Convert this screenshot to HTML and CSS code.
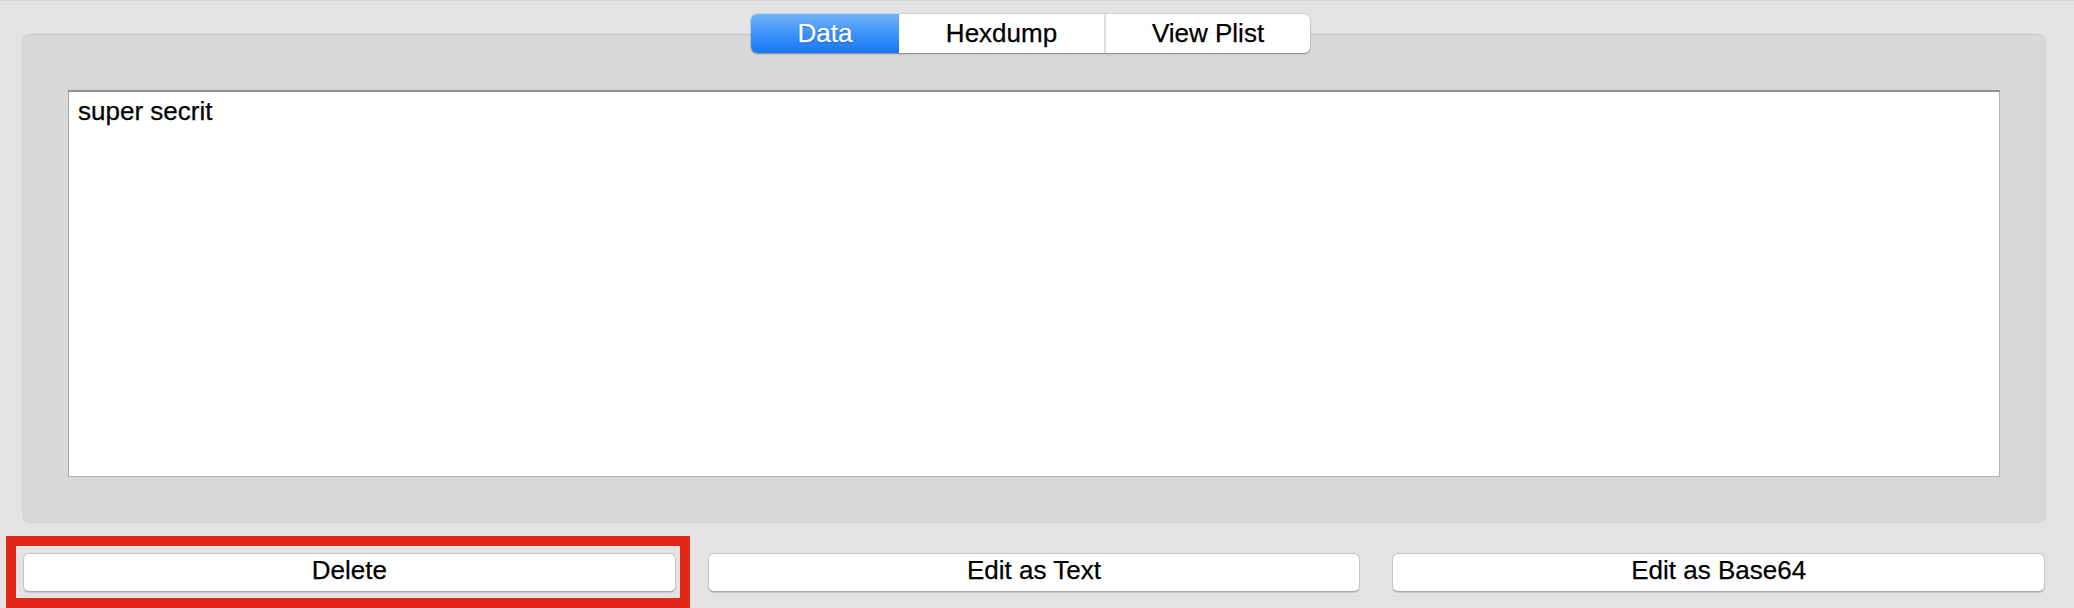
FILE: index.html
```html
<!DOCTYPE html>
<html>
<head>
<meta charset="utf-8">
<link rel="stylesheet" href="styles.css">
</head>
<body>
<div class="window">
  <div class="tabs">
    <div class="segmented">
      <div class="seg seg-data active">Data</div>
      <div class="seg seg-hex">Hexdump</div>
      <div class="seg seg-plist">View Plist</div>
    </div>
  </div>
  <div class="groupbox">
    <div class="textarea">super secrit</div>
  </div>
  <div class="actions">
    <div class="btn-wrap">
      <button class="btn">Delete</button>
      <div class="highlight"></div>
    </div>
    <div class="btn-wrap"><button class="btn">Edit as Text</button></div>
    <div class="btn-wrap"><button class="btn">Edit as Base64</button></div>
  </div>
</div>
</body>
</html>
```

FILE: styles.css
```css
html, body {
  margin: 0;
  padding: 0;
}
body {
  width: 2074px;
  height: 608px;
  overflow: hidden;
  background: #e3e3e3;
  border-top: 1px solid #d4d4d4;
  box-sizing: border-box;
  font-family: "Liberation Sans", Arial, sans-serif;
  font-size: 26px;
  color: #000;
  -webkit-text-stroke: 0.25px currentColor;
}
.window {
  padding: 13px 28px 0 22px;
}
.tabs {
  display: flex;
  justify-content: center;
  padding-right: 7px;
  margin-bottom: -19px;
  position: relative;
  z-index: 2;
}
.segmented {
  display: flex;
  height: 39px;
  border-radius: 6px;
  background: #fff;
  box-shadow: 0 1px 1.5px rgba(0, 0, 0, 0.35), 0 0 0 0.5px rgba(0, 0, 0, 0.12);
}
.seg {
  display: flex;
  align-items: center;
  justify-content: center;
  box-sizing: border-box;
  height: 39px;
  padding-bottom: 2px;
  line-height: 1;
}
.seg-data {
  width: 148px;
  border-radius: 6px 0 0 6px;
  background: linear-gradient(to bottom, #6fb4fb 0%, #3d93f8 50%, #1777f6 100%);
  color: #fff;
  text-shadow: 0 1px 1.5px rgba(0, 20, 90, 0.45);
}
.seg-hex {
  width: 207px;
  border-right: 2px solid #dedede;
}
.seg-plist {
  width: 204px;
  border-radius: 0 6px 6px 0;
}
.groupbox {
  position: relative;
  z-index: 1;
  height: 489px;
  box-sizing: border-box;
  background: #d8d8d8;
  border: 1px solid #d2d2d2;
  border-top-color: #c9c9c9;
  border-radius: 8px;
  padding: 55px 45px 0 45px;
}
.textarea {
  height: 387px;
  box-sizing: border-box;
  background: #fff;
  border: 1px solid #b3b3b3;
  border-top: 2px solid #8f8f8f;
  border-left-color: #a3a3a3;
  padding: 4px 9px;
  line-height: 30px;
}
.actions {
  display: flex;
  gap: 32px;
  margin-top: 30px;
  padding-left: 1px;
  padding-right: 1px;
}
.btn-wrap {
  flex: 1;
  position: relative;
}
.btn {
  display: block;
  width: 100%;
  height: 39px;
  margin: 0;
  padding: 0 0 5px 0;
  background: #fff;
  border: 1px solid #c6c6c6;
  border-bottom-color: #a9a9a9;
  border-radius: 6px;
  box-shadow: 0 1px 1px rgba(0, 0, 0, 0.12);
  font-family: "Liberation Sans", Arial, sans-serif;
  font-size: 26px;
  color: #000;
  -webkit-text-stroke: 0.25px currentColor;
  line-height: 1;
}
.highlight {
  position: absolute;
  top: -17px;
  left: -17px;
  right: -14px;
  bottom: -16px;
  border: 10px solid #e1271a;
  pointer-events: none;
}
```
